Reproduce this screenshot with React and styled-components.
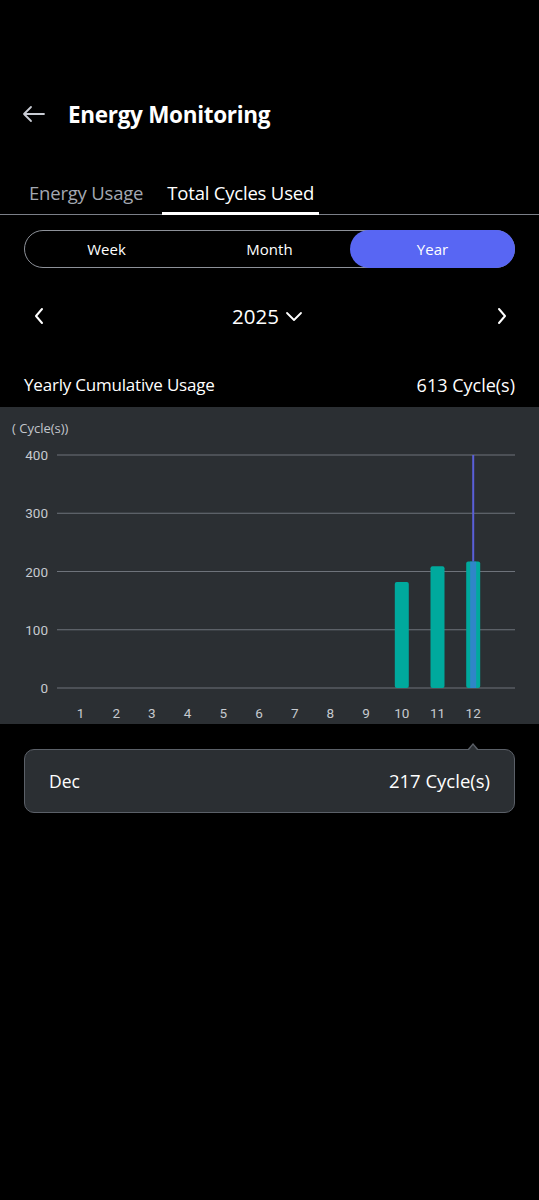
import React from "react";
import styled, { createGlobalStyle } from "styled-components";

const Global = createGlobalStyle`
  html, body { margin: 0; padding: 0; background: #000; }
  body { font-family: "Open Sans", "Noto Sans", sans-serif; color: #fff; }
  * { box-sizing: border-box; }
`;

const Page = styled.div`
  width: 539px;
  min-height: 1200px;
  background: #000;
  display: flex;
  flex-direction: column;
`;

const Header = styled.header`
  margin-top: 86px;
  height: 56px;
  display: flex;
  align-items: center;
  gap: 22px;
  padding-left: 22px;
`;

const BackBtn = styled.button`
  background: none;
  border: 0;
  padding: 0;
  width: 24px;
  height: 24px;
  display: flex;
  align-items: center;
  justify-content: center;
  color: #c9ccd4;
`;

const Title = styled.h1`
  margin: 0;
  font-size: 22.5px;
  font-weight: 700;
  letter-spacing: -0.3px;
`;

const Tabs = styled.div`
  margin-top: 30px;
  display: flex;
  gap: 14px;
  padding-left: 24px;
  border-bottom: 1.5px solid #7b7f88;
`;

const Tab = styled.div`
  padding: 8px 5px 7px;
  font-size: 18.5px;
  color: ${(p) => (p.$active ? "#fff" : "#a3a8b2")};
  border-bottom: 3px solid ${(p) => (p.$active ? "#fff" : "transparent")};
  margin-bottom: -1.5px;
  letter-spacing: -0.2px;
`;

const Segment = styled.div`
  margin: 15px 24px 0;
  height: 38px;
  border: 1px solid #8d9199;
  border-radius: 19px;
  display: grid;
  grid-template-columns: 1fr 1fr 1fr;
`;

const SegBtn = styled.div`
  display: flex;
  align-items: center;
  justify-content: center;
  font-size: 15px;
  border-radius: 19px;
  margin: -1px;
  background: ${(p) => (p.$active ? "#5866f3" : "transparent")};
  color: #fff;
`;

const YearRow = styled.div`
  margin-top: 24px;
  height: 48px;
  display: flex;
  align-items: center;
  justify-content: space-between;
  padding: 0 26px 0 28px;
`;

const NavIcon = styled.span`
  display: flex;
  width: 22px;
  height: 22px;
  align-items: center;
  justify-content: center;
  color: #fff;
`;

const YearLabel = styled.div`
  display: flex;
  align-items: center;
  gap: 6px;
  font-size: 20.5px;
  margin-left: -6px;
`;

const SummaryRow = styled.div`
  margin-top: 34px;
  height: 22px;
  display: flex;
  align-items: center;
  justify-content: space-between;
  padding: 0 24px;
  font-size: 17px;
  letter-spacing: -0.2px;
`;

const SummaryValue = styled.span`
  font-size: 18px;
  letter-spacing: 0;
`;

const ChartPanel = styled.section`
  margin-top: 11px;
  background: #2b2f33;
  height: 317px;
  display: flex;
  flex-direction: column;
`;

const AxisUnit = styled.div`
  padding: 12px 0 0 12px;
  font-size: 13px;
  color: #c2c6cc;
  height: 33px;
`;

const ChartSvg = styled.svg`
  display: block;
`;

const Tooltip = styled.div`
  position: relative;
  margin: 25px 24px 0;
  height: 64px;
  background: #2b2f33;
  border: 1.5px solid #5b6068;
  border-radius: 10px;
  display: flex;
  align-items: center;
  justify-content: space-between;
  padding: 0 24px;
  font-size: 17.5px;
  &::before {
    content: "";
    position: absolute;
    top: -7px;
    left: 442px;
    width: 0;
    height: 0;
    border-left: 6px solid transparent;
    border-right: 6px solid transparent;
    border-bottom: 7px solid #5b6068;
  }
  &::after {
    content: "";
    position: absolute;
    top: -5px;
    left: 443.5px;
    width: 0;
    height: 0;
    border-left: 4.5px solid transparent;
    border-right: 4.5px solid transparent;
    border-bottom: 5px solid #2b2f33;
  }
`;

const TipValue = styled.span`
  font-size: 18.5px;
`;

const values = [0, 0, 0, 0, 0, 0, 0, 0, 0, 182, 209, 217];

function Chart() {
  const top = 15;
  const step = 58.25;
  const base = top + step * 4;
  const x0 = 80.5;
  const dx = 35.7;
  const ticks = [400, 300, 200, 100, 0];
  return (
    <ChartSvg width="539" height="284" viewBox="0 0 539 284">
      {ticks.map((t, i) => (
        <g key={t}>
          <line x1="57" x2="515" y1={top + i * step} y2={top + i * step} stroke="#6e737b" strokeWidth="1.2" />
          <text x="48" y={top + i * step + 5} textAnchor="end" fontSize="13.5" fill="#c6cacf" fontFamily="Roboto, sans-serif">
            {t}
          </text>
        </g>
      ))}
      {values.map((v, i) => {
        const cx = x0 + i * dx;
        const h = (v / 100) * step;
        return (
          <g key={i}>
            {v > 0 && (
              <rect x={cx - 7} y={base - h} width="14" height={h} rx="2" fill="#00a99d" />
            )}
            <text x={cx} y="278" textAnchor="middle" fontSize="13.5" fill="#c6cacf" fontFamily="Roboto, sans-serif">
              {i + 1}
            </text>
          </g>
        );
      })}
      <line x1={x0 + 11 * dx} x2={x0 + 11 * dx} y1={top} y2={base - (217 / 100) * step} stroke="#5a5fd8" strokeWidth="2" />
      <line x1={x0 + 11 * dx} x2={x0 + 11 * dx} y1={base - (217 / 100) * step} y2={base} stroke="#2f86c8" strokeWidth="6" />
    </ChartSvg>
  );
}

export default function App() {
  return (
    <Page>
      <Global />
      <Header>
        <BackBtn aria-label="back">
          <svg width="24" height="24" viewBox="0 0 24 24" fill="none" stroke="currentColor" strokeWidth="1.8" strokeLinecap="round" strokeLinejoin="round">
            <path d="M22 12H2M9 5L2 12l7 7" />
          </svg>
        </BackBtn>
        <Title>Energy Monitoring</Title>
      </Header>
      <Tabs>
        <Tab>Energy Usage</Tab>
        <Tab $active>Total Cycles Used</Tab>
      </Tabs>
      <Segment>
        <SegBtn>Week</SegBtn>
        <SegBtn>Month</SegBtn>
        <SegBtn $active>Year</SegBtn>
      </Segment>
      <YearRow>
        <NavIcon>
          <svg width="14" height="20" viewBox="0 0 14 20" fill="none" stroke="currentColor" strokeWidth="2" strokeLinecap="round" strokeLinejoin="round">
            <path d="M10 3L4 10l6 7" />
          </svg>
        </NavIcon>
        <YearLabel>
          2025
          <svg width="18" height="12" viewBox="0 0 18 12" fill="none" stroke="currentColor" strokeWidth="1.8" strokeLinecap="round" strokeLinejoin="round">
            <path d="M2 3l7 7 7-7" />
          </svg>
        </YearLabel>
        <NavIcon>
          <svg width="14" height="20" viewBox="0 0 14 20" fill="none" stroke="currentColor" strokeWidth="2" strokeLinecap="round" strokeLinejoin="round">
            <path d="M4 3l6 7-6 7" />
          </svg>
        </NavIcon>
      </YearRow>
      <SummaryRow>
        <span>Yearly Cumulative Usage</span>
        <SummaryValue>613 Cycle(s)</SummaryValue>
      </SummaryRow>
      <ChartPanel>
        <AxisUnit>( Cycle(s))</AxisUnit>
        <Chart />
      </ChartPanel>
      <Tooltip>
        <span>Dec</span>
        <TipValue>217 Cycle(s)</TipValue>
      </Tooltip>
    </Page>
  );
}
